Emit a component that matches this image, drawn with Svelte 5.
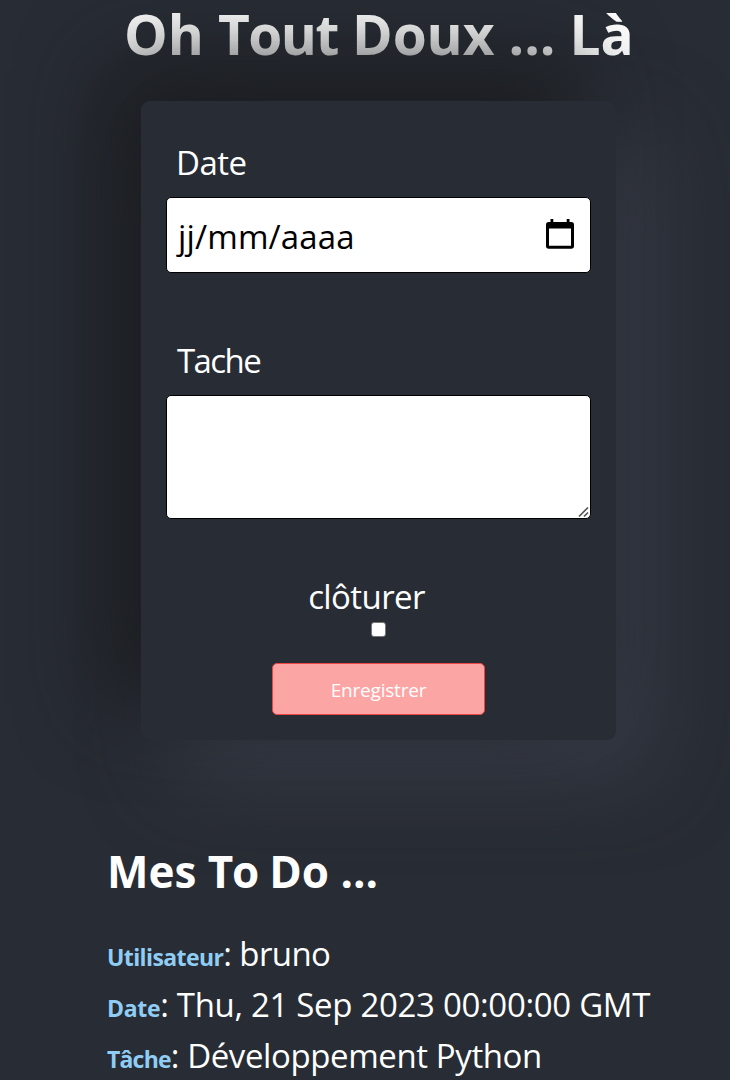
<script>
  let closed = $state(false);
  let task = $state('');
  const todo = [
    { label: 'Utilisateur', value: 'bruno', kind: 'row-user' },
    { label: 'Date', value: 'Thu, 21 Sep 2023 00:00:00 GMT', kind: 'row-date' },
    { label: 'Tâche', value: 'Développement Python', kind: 'row-task' }
  ];
</script>

<main>
  <h1>Oh <span>Tout</span> Doux ... Là</h1>

  <form onsubmit={(e) => e.preventDefault()}>
    <div class="label date-label">Date</div>
    <div class="field date">
      <span class="hint">jj/mm/aaaa</span>
      <svg width="28" height="31" viewBox="0 0 28 31" aria-hidden="true">
        <path fill="#000" fill-rule="evenodd" d="M4.5 0h2.8v3h13.4V0h2.8v3h1.7Q28 3 28 5.8V27q0 2.8-2.8 2.8H2.8Q0 29.8 0 27V5.8Q0 3 2.8 3h1.7zM3 9.5v17.3h22V9.5z" />
      </svg>
    </div>

    <div class="label task-label">Tache</div>
    <div class="area">
      <textarea class="field" bind:value={task} aria-label="Tache"></textarea>
      <svg class="grip" width="12" height="12" viewBox="0 0 12 12" aria-hidden="true">
        <path d="M1 10.5L10 1.5M6 10.5L10 6.5" stroke="#555" stroke-width="1.7" fill="none" />
      </svg>
    </div>

    <div class="close-label">clôturer</div>
    <input type="checkbox" bind:checked={closed} aria-label="clôturer" />
    <button>Enregistrer</button>
  </form>

  <section>
    <h2>Mes <span>To</span> Do ...</h2>
    {#each todo as row}
      <p class={row.kind}><b>{row.label}</b><span>: {row.value}</span></p>
    {/each}
  </section>
</main>

<style>
  :global(body) {
    background: #282c34;
    overflow: hidden;
  }
  main {
    box-sizing: border-box;
    width: 730px;
    height: 1080px;
    overflow: hidden;
    background: #282c34;
    color: #fff;
    font-family: 'Open Sans', 'Noto Sans', sans-serif;
    font-size: 33px;
    line-height: 51px;
  }
  h1 {
    margin: 0;
    height: 101px;
    padding-left: 124px;
    font-size: 55px;
    line-height: 68px;
    font-weight: 700;
    white-space: nowrap;
    letter-spacing: -0.1px;
  }
  h1 span {
    letter-spacing: -1.5px;
  }
  form {
    position: relative;
    box-sizing: border-box;
    width: 475px;
    height: 639px;
    margin-left: 141px;
    padding: 0 25px;
    display: flex;
    flex-direction: column;
    align-items: center;
    border-radius: 9px;
    background: #282c34;
    box-shadow: -34px -34px 85px #1a1c1f, 34px 34px 85px #383d49;
  }
  .label {
    align-self: stretch;
    padding-left: 10px;
  }
  .date-label {
    margin-top: 36px;
    letter-spacing: -0.5px;
  }
  .field {
    box-sizing: border-box;
    width: 425px;
    border: 1px solid #000;
    border-radius: 5px;
    background: #fff;
    color: #000;
  }
  .date {
    display: flex;
    align-items: center;
    justify-content: space-between;
    height: 76px;
    margin-top: 9px;
    padding: 3px 16px 0 11px;
    letter-spacing: 0.15px;
  }
  .date svg {
    margin-top: -5px;
  }
  .task-label {
    margin-top: 62px;
    padding-left: 11px;
    letter-spacing: -1.6px;
  }
  .area {
    position: relative;
    margin-top: 9px;
    height: 124px;
  }
  textarea {
    display: block;
    height: 124px;
    resize: none;
    outline: none;
    padding: 10px;
    font: inherit;
  }
  .grip {
    position: absolute;
    right: 1px;
    bottom: 1px;
  }
  .close-label {
    margin-top: 52px;
    margin-right: 24px;
    letter-spacing: -0.6px;
  }
  input {
    appearance: none;
    box-sizing: border-box;
    width: 15px;
    height: 15px;
    margin: 0 1px 0 0;
    border: 1px solid #767676;
    border-radius: 3px;
    background: #fff;
  }
  input:checked {
    background: #fca5a5;
  }
  button {
    box-sizing: border-box;
    width: 213px;
    height: 52px;
    margin-top: 26px;
    padding: 2px 0 0;
    border: 1px solid #ef4444;
    border-radius: 5px;
    background: #fca5a5;
    color: #fff;
    font: 19px/26px 'Open Sans', 'Noto Sans', sans-serif;
    letter-spacing: -0.2px;
  }
  section {
    padding: 98px 0 0 107px;
  }
  h2 {
    margin: 0 0 24px;
    font-size: 44px;
    line-height: 66px;
    font-weight: 700;
  }
  h2 span {
    letter-spacing: -1.4px;
  }
  p {
    margin: 0;
    height: 51px;
    white-space: nowrap;
    letter-spacing: -0.32px;
  }
  b {
    color: #90cdf4;
    font-size: 23px;
    font-weight: 700;
  }
  .row-user {
    letter-spacing: -0.6px;
  }
  .row-task {
    letter-spacing: -0.4px;
  }
  .row-task b {
    letter-spacing: -0.8px;
  }
</style>
